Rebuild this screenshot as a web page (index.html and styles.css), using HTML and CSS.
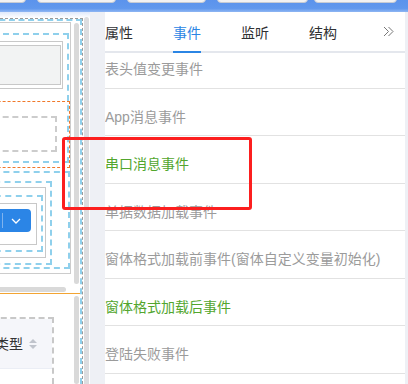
FILE: index.html
```html
<!DOCTYPE html>
<html lang="zh-CN">

<head>
    <meta charset="UTF-8">
    <meta name="viewport" content="width=device-width, initial-scale=1.0">
    <title>窗体设计 - 事件</title>
    <link rel="stylesheet" href="styles.css">
</head>

<body>
    <div class="app">
        <div class="toolbar">
            <span class="tool-btn b1"></span>
            <span class="tool-btn b2"></span>
            <span class="tool-btn b3"></span>
            <span class="tool-btn b4"></span>
            <span class="tool-btn b5"></span>
        </div>

        <div class="main">
            <div class="canvas">
                <div class="stage">
                    <div class="stage-inner">
                        <div class="upper">
                            <div class="frame">
                                <div class="zone">
                                    <div class="gbox">
                                        <div class="fill"></div>
                                    </div>
                                    <div class="sel">
                                        <div class="dbox"></div>
                                    </div>
                                </div>
                                <div class="zone zone2">
                                    <div class="nest n1">
                                        <div class="nest n2">
                                            <div class="nest n3">
                                                <div class="nest n4">
                                                    <div class="split-btn">
                                                        <span class="split-line"></span>
                                                        <svg class="caret" width="10" height="6" viewBox="0 0 10 6">
                                                            <path d="M1 1l4 4 4-4" fill="none" stroke="#fff" stroke-width="1.3"/>
                                                        </svg>
                                                    </div>
                                                </div>
                                            </div>
                                        </div>
                                    </div>
                                </div>
                            </div>
                            <div class="vbar"></div>
                        </div>
                        <div class="hbar"></div>
                        <div class="splitter"></div>
                        <div class="lower">
                            <div class="grid">
                                <div class="grid-head">
                                    <span class="col-title">类型</span>
                                    <span class="sort">
                                        <svg width="10" height="12" viewBox="0 0 10 12">
                                            <path d="M5 1l4 4H1z" fill="#c0c4cc"/>
                                            <path d="M5 11l4-4H1z" fill="#c0c4cc"/>
                                        </svg>
                                    </span>
                                </div>
                            </div>
                            <div class="vbar vbar-low"></div>
                        </div>
                    </div>
                </div>
                <div class="canvas-scroll"></div>
            </div>

            <div class="panel">
                <div class="tabs">
                    <span class="tab">属性</span>
                    <span class="tab active">事件</span>
                    <span class="tab">监听</span>
                    <span class="tab">结构</span>
                    <span class="tab-more">
                        <svg width="11" height="11" viewBox="0 0 11 11">
                            <path d="M1 1l4.5 4.5L1 10M5.5 1l4.5 4.5-4.5 4.5" fill="none" stroke="#777" stroke-width="1"/>
                        </svg>
                    </span>
                </div>
                <div class="events">
                    <div class="event first">表头值变更事件</div>
                    <div class="event">App消息事件</div>
                    <div class="event on">串口消息事件</div>
                    <div class="event">单据数据加载事件</div>
                    <div class="event">窗体格式加载前事件(窗体自定义变量初始化)</div>
                    <div class="event on">窗体格式加载后事件</div>
                    <div class="event">登陆失败事件</div>
                </div>
            </div>
        </div>

        <div class="highlight"></div>
    </div>
</body>

</html>
```

FILE: styles.css
```css
* {
    box-sizing: border-box;
}

html,
body {
    margin: 0;
    padding: 0;
    overflow: hidden;
}

body {
    font-family: "Liberation Sans", "Noto Sans CJK SC", sans-serif;
    font-size: 14px;
    background-color: #eef0f5;
}

.app {
    position: relative;
    width: 408px;
    height: 384px;
    overflow: hidden;
}

/* top toolbar, only the bottom of the buttons is visible */
.toolbar {
    height: 12px;
    display: flex;
    background: linear-gradient(#5b93ec 0, #6098ed 70%, #8fb6f3 100%);
}

.tool-btn {
    height: 8px;
    margin-top: -5px;
    background-color: #f2f2f2;
    border: 1px solid #c6cbd4;
    border-radius: 0 0 4px 4px;
}

.b1 {
    width: 30px;
    margin-left: -4px;
}

.b2 {
    width: 79px;
    margin-left: 11px;
}

.b3 {
    width: 79px;
    margin-left: 11px;
}

.b4 {
    width: 91px;
    margin-left: 11px;
}

.b5 {
    width: 83px;
    margin-left: 6px;
}

.main {
    display: flex;
    height: 372px;
}

/* design canvas on the left */
.canvas {
    width: 90px;
    flex: none;
    display: flex;
    padding-top: 6px;
    background: linear-gradient(#dfe9fb 0, #ffffff 6px);
    overflow: hidden;
}

.stage {
    flex: none;
    width: 123px;
    margin-left: -40px;
    border: 1px dashed #9a9a9a;
    border-bottom: none;
}

.stage-inner {
    height: 100%;
    border: 2px dashed #8fd0ec;
    border-bottom: none;
    display: flex;
    flex-direction: column;
}

.upper {
    display: flex;
    height: 263px;
}

.frame {
    flex: 1;
    height: 252px;
    margin-top: 1px;
    border: 1px solid #cccccc;
    border-left: none;
    padding-top: 10px;
}

.zone {
    border: 2px dashed #8fd0ec;
    border-left: none;
    margin-right: 1px;
    height: 130px;
}

.gbox {
    margin: 6px 4px 0 0;
    border: 1px solid #c8c8c8;
    padding: 3px 1px 3px 0;
}

.fill {
    height: 40px;
    background-color: #f2f3f3;
    border: 1px solid #c8c8c8;
}

.sel {
    margin: 12px -3px 0 0;
    border: 1px dashed #f0782a;
    padding: 14px 12px 15px 0;
}

.dbox {
    height: 36px;
    border: 2px dashed #cccccc;
    border-left: none;
}

.zone2 {
    margin-top: 8px;
    margin-right: 0;
    height: 98px;
    padding-top: 8px;
}

.nest {
    border-left: none;
}

.n1 {
    margin-right: 16px;
    height: 84px;
    border: 2px dashed #8fd0ec;
    border-left: none;
    padding: 4px 4px 0 0;
}

.n2 {
    height: 71px;
    border: 1px solid #c8c8c8;
    border-left: none;
    padding: 7px 2px 0 0;
}

.n3 {
    height: 57px;
    border: 2px dashed #8fd0ec;
    border-left: none;
    padding: 6px 4px 0 0;
}

.n4 {
    height: 42px;
    border: 1px solid #c8c8c8;
    border-left: none;
    padding: 5px 5px 0 0;
}

.split-btn {
    height: 23px;
    background-color: #2b85e6;
    border-radius: 4px;
    display: flex;
    align-items: center;
    justify-content: flex-end;
    padding-right: 10px;
}

.split-line {
    width: 1px;
    height: 15px;
    background-color: #7fb3ee;
    margin-right: 8px;
}

.caret {
    display: block;
}

.vbar {
    width: 5px;
    flex: none;
    margin: 2px 1px 0 3px;
    border-radius: 3px;
    background-color: #d9d9d9;
}

.hbar {
    height: 5px;
    width: 103px;
    margin-top: 3px;
    border-radius: 3px;
    background-color: #d9d9d9;
}

.splitter {
    height: 1px;
    margin-top: 1px;
    background-color: #f2a433;
}

.lower {
    flex: 1;
    display: flex;
    padding-top: 1px;
}

.grid {
    flex: 1;
    margin: 22px 17px 0 0;
    border-top: 2px dashed #c8c8c8;
    border-right: 2px dashed #c8c8c8;
}

.grid-head {
    height: 50px;
    display: flex;
    align-items: center;
    justify-content: flex-end;
    padding-right: 14px;
    background-color: #f5f6fa;
    border-bottom: 1px solid #ebeef5;
}

.col-title {
    color: #333333;
    line-height: 20px;
}

.sort {
    display: flex;
    margin-left: 5px;
}

.vbar-low {
    margin-top: 1px;
}

.canvas-scroll {
    width: 5px;
    flex: none;
    margin: -1px 0 0 1px;
    border-radius: 3px 3px 0 0;
    background-color: #dcdde0;
}

/* property panel */
.panel {
    width: 300px;
    flex: none;
    margin-left: 15px;
    background-color: #ffffff;
    display: flex;
    flex-direction: column;
}

.tabs {
    display: flex;
    align-items: flex-end;
    padding-top: 11px;
    border-bottom: 2px solid #e4e7ed;
}

.tab {
    width: 28px;
    margin-right: 40px;
    line-height: 20px;
    padding-bottom: 8px;
    margin-bottom: -2px;
    border-bottom: 2px solid transparent;
    color: #303133;
}

.tab.active {
    color: #2b85e4;
    border-bottom-color: #2b85e4;
}

.tab-more {
    margin: 0 11px 14px auto;
    display: flex;
}

.events {
    flex: 1;
    overflow: hidden;
}

.event {
    padding: 20px 0 10.5px;
    line-height: 16px;
    border-bottom: 1px solid #e2e2e2;
    color: #9b9b9b;
    white-space: nowrap;
}

.event.first {
    margin-top: -12px;
}

.event.on {
    color: #52a62e;
}

/* red marker drawn over the screen */
.highlight {
    position: absolute;
    left: 62px;
    top: 137px;
    width: 190px;
    height: 73px;
    border: 3px solid #fc1f1f;
    border-radius: 3px;
}
```
